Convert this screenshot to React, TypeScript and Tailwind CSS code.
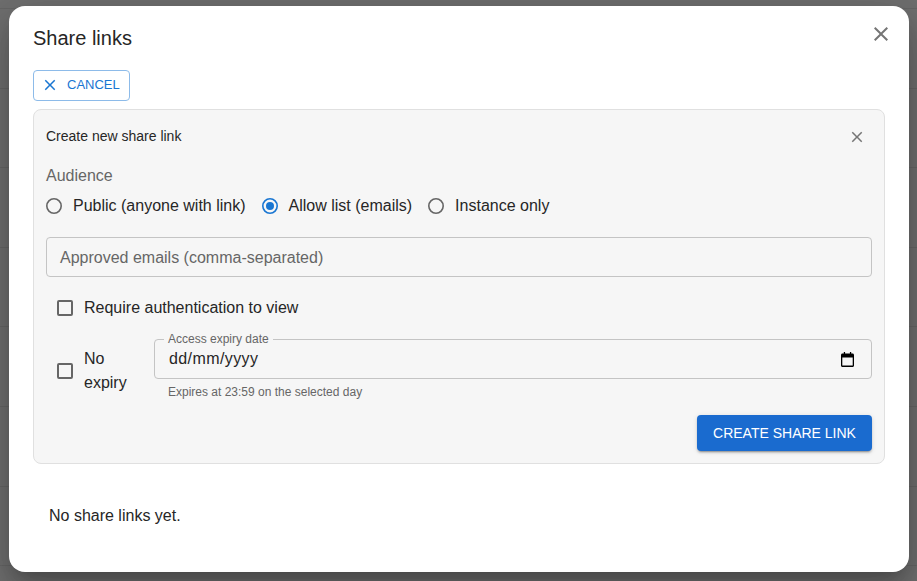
import React from "react";

const X = ({ size, cls }: { size: number; cls: string }) => (
  <svg width={size} height={size} viewBox="0 0 24 24" className={cls} fill="currentColor">
    <path d="M19 6.41 17.59 5 12 10.59 6.41 5 5 6.41 10.59 12 5 17.59 6.41 19 12 13.41 17.59 19 19 17.59 13.41 12z" />
  </svg>
);

const Radio = ({ label, on }: { label: string; on?: boolean }) => (
  <label className="flex items-center gap-[9px]">
    <svg width="18" height="18" viewBox="0 0 18 18" className={on ? "text-[#1976d2]" : "text-[#666666]"} fill="none" stroke="currentColor">
      <circle cx="8" cy="9" r="7.2" strokeWidth="1.6" />
      {on && <circle cx="8" cy="9" r="4" fill="currentColor" stroke="none" />}
    </svg>
    <span className="text-base leading-6 text-[#262626]">{label}</span>
  </label>
);

const Check = () => (
  <span className="block size-[16px] shrink-0 rounded-[2px] border-2 border-[#666666]" />
);

export default function App() {
  return (
    <div className="relative h-[581px] w-[917px] overflow-hidden bg-[#6f6f6f] font-['Liberation_Sans',Arial,sans-serif]">
      <div className="flex flex-col">
        <div className="h-[9px] border-b border-[#666666]" />
        {[0, 1, 2, 3, 4, 5, 6, 7].map((i) => (
          <div key={i} className="h-[79.6px] border-b border-[#666666]" />
        ))}
      </div>
      <div className="absolute left-[9px] top-[6px] flex h-[566px] w-[900px] flex-col rounded-[16px] bg-white shadow-[0_11px_15px_-7px_rgba(0,0,0,0.2),0_24px_38px_3px_rgba(0,0,0,0.14),0_9px_46px_8px_rgba(0,0,0,0.12)]">
        <div className="flex items-start justify-between pl-6 pr-4 pt-4">
          <h2 className="text-[20px] leading-8 text-[#262626]">Share links</h2>
          <X size={24} cls="text-[#757575]" />
        </div>
        <div className="flex flex-col px-6 pt-4">
          <button className="flex h-[31px] w-[97px] items-center gap-2 rounded-[4px] border border-[#8dbbe9] pl-[7px] text-[13px] text-[#1976d2]">
            <X size={18} cls="-mt-[1px]" />
            <span className="-mt-[2px]">CANCEL</span>
          </button>
          <section className="mt-2 flex h-[355px] flex-col rounded-[8px] border border-[#e0e0e0] bg-[#f6f6f6] px-3">
            <div className="flex h-[54px] items-center justify-between pr-[6px]">
              <span className="-mt-[2px] text-sm text-[#262626]">Create new share link</span>
              <X size={18} cls="text-[#757575]" />
            </div>
            <div className="text-base leading-6 text-[#666666]">Audience</div>
            <div className="mt-[6px] flex items-center gap-4">
              <Radio label="Public (anyone with link)" />
              <Radio label="Allow list (emails)" on />
              <Radio label="Instance only" />
            </div>
            <div className="mt-[19px] flex h-10 items-center rounded-[4px] border border-[#c4c4c4] px-[13px] pt-[1px] text-base text-[#666666]">
              Approved emails (comma-separated)
            </div>
            <div className="mt-[19px] flex items-center gap-[11px] pl-[11px]">
              <Check />
              <span className="text-base leading-6 text-[#262626]">Require authentication to view</span>
            </div>
            <div className="mt-[19px] flex items-start pl-[11px]">
              <div className="mt-2 flex h-[48px] w-[97px] shrink-0 items-center gap-[11px] self-start">
                <Check />
                <span className="text-base leading-6 text-[#262626]">No<br />expiry</span>
              </div>
              <div className="flex flex-1 flex-col">
                <div className="relative flex h-10 items-center justify-between rounded-[4px] border border-[#c4c4c4] pl-[14px] pr-[17px]">
                  <span className="absolute -top-[8px] left-[9px] bg-[#f6f6f6] px-[4px] text-xs leading-[14px] text-[#666666]">Access expiry date</span>
                  <span className="text-base tracking-[0.4px] text-[#262626]">dd/mm/yyyy</span>
                  <svg width="13" height="15" viewBox="0 0 14 15" className="text-black" preserveAspectRatio="none">
                    <path fill="currentColor" d="M3 0h1.4v1.5h5.2V0H11v1.5h1.5c.8 0 1.5.7 1.5 1.5v10.5c0 .8-.7 1.5-1.5 1.5h-11C.7 15 0 14.3 0 13.5V3c0-.8.7-1.5 1.5-1.5H3zM1.4 5.5v8h11.2v-8z" />
                  </svg>
                </div>
                <div className="mt-[6px] pl-[14px] text-xs leading-[14px] text-[#666666]">Expires at 23:59 on the selected day</div>
              </div>
            </div>
            <div className="mt-[16px] flex justify-end">
              <button className="h-9 w-[175px] rounded-[4px] bg-[#1a6bcf] text-sm text-white shadow-[0_3px_1px_-2px_rgba(0,0,0,0.2),0_2px_2px_0_rgba(0,0,0,0.14),0_1px_5px_0_rgba(0,0,0,0.12)]">
                CREATE SHARE LINK
              </button>
            </div>
          </section>
          <p className="mt-[40px] pl-4 text-base leading-6 text-[#262626]">No share links yet.</p>
        </div>
      </div>
    </div>
  );
}
